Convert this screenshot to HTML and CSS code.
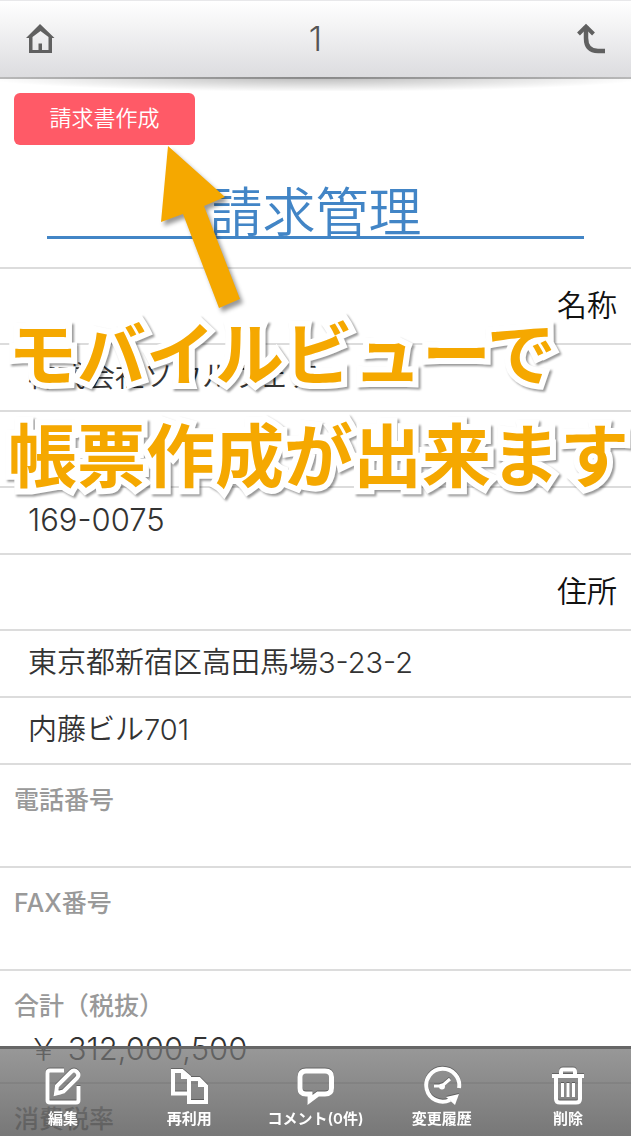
FILE: index.html
```html
<!DOCTYPE html>
<html lang="ja">
<head>
    <meta charset="UTF-8">
    <meta name="viewport" content="width=device-width, initial-scale=1.0">
    <title>請求管理</title>
    <link rel="stylesheet" href="styles.css">
</head>
<body>
    <header class="topbar">
        <button class="top-btn" aria-label="ホーム">
            <svg width="30" height="32" viewBox="0 0 30 32">
                <path d="M15 2 L29.500 16 H27 V31 H4 V16 H1 Z M15.500 9 L7.500 15 V28 H13.500 V21.500 H17 V28 H23.500 V15 Z" fill="#606060" fill-rule="evenodd"/>
            </svg>
        </button>
        <h1>1</h1>
        <button class="top-btn" aria-label="戻る">
            <svg width="30" height="32" viewBox="0 0 30 32" fill="none" stroke="#606060">
                <path d="M2.500 12 L10 4.500 L17.500 12" stroke-width="4"/>
                <path d="M10 4 V16 Q10 29 22 29 H29" stroke-width="4.500"/>
            </svg>
        </button>
    </header>

    <main class="record">
        <div class="actions">
            <button class="create">請求書作成</button>
        </div>
        <h2 class="title">請求管理</h2>
        <h3 class="label">名称</h3>
        <div class="value">株式会社ソウルウェア</div>
        <div class="label"></div>
        <div class="value number">169-0075</div>
        <h3 class="label">住所</h3>
        <div class="value">東京都新宿区高田馬場3-23-2</div>
        <div class="value">内藤ビル701</div>
        <div class="field"><h4>電話番号</h4></div>
        <div class="field"><h4>FAX番号</h4></div>
        <div class="field">
            <h4>合計（税抜）</h4>
            <p class="number">￥ 312,000,500</p>
        </div>
        <div class="field"><h4>消費税率</h4></div>
    </main>

    <!-- Callout over the record -->
    <svg class="arrow" width="100" height="180" viewBox="0 0 100 180">
        <path d="M18 6 L75 57 L54 66 L90 159 L69 168 L33 74 L11 82 Z" fill="#f5a800"/>
    </svg>
    <p class="callout">モバイルビューで<br>帳票作成が出来ます</p>

    <nav class="toolbar">
        <button>
            <svg width="40" height="40" viewBox="0 0 40 40" fill="none" stroke="#fff" stroke-width="4">
                <path d="M21 4.500 H7 Q4.500 4.500 4.500 7 V34 Q4.500 36.500 7 36.500 H33 Q35.500 36.500 35.500 34 V20"/>
                <path d="M13 27.500 L14 20 L28 6 Q31 3 34 6 Q37 9 34 12 L20.500 25.500 Z"/>
                <path d="M12 29 L13 22 L19 28 Z" fill="#fff" stroke="none"/>
            </svg>
            <span>編集</span>
        </button>
        <button>
            <svg width="40" height="40" viewBox="0 0 40 40" fill="none" stroke="#fff" stroke-width="4">
                <path d="M18 27.500 H4 V5 H13 L20 11 V12"/>
                <path d="M12 4 V13 H18 L20 11 Z" fill="#fff" stroke="none"/>
                <path d="M20 13 H30 L37 20 V36 H20 Z"/>
                <path d="M29 12 V21 H38 Z" fill="#fff" stroke="none"/>
            </svg>
            <span>再利用</span>
        </button>
        <button>
            <svg width="40" height="40" viewBox="0 0 40 40" fill="none" stroke="#fff" stroke-width="5">
                <path d="M10 5 H29 Q35.500 5 35.500 11 V22 Q35.500 28 29 28 H22 L14 34 V28 H10 Q4 28 4 22 V11 Q4 5 10 5 Z"/>
            </svg>
            <span>コメント(0件)</span>
        </button>
        <button>
            <svg width="40" height="40" viewBox="0 0 40 40" fill="none" stroke="#fff" stroke-width="4">
                <path d="M37 22 A16.500 16.500 0 1 0 28 34"/>
                <path d="M24 31 L37 28 L33 39 Z" fill="#fff" stroke="none"/>
                <path d="M12 20 H20 L28 13" stroke-width="3"/>
                <circle cx="20" cy="20.500" r="2" fill="#fff" stroke-width="2"/>
            </svg>
            <span>変更履歴</span>
        </button>
        <button>
            <svg width="40" height="40" viewBox="0 0 40 40" fill="none" stroke="#fff" stroke-width="4">
                <path d="M13 9 V6 Q13 3.500 15 3.500 H25 Q27 3.500 27 6 V9 M4 10 H36"/>
                <path d="M8 10 V33 Q8 36.500 12 36.500 H28 Q32 36.500 32 33 V10"/>
                <path d="M14.500 17 V31 M20 17 V31 M25.500 17 V31" stroke-width="3"/>
            </svg>
            <span>削除</span>
        </button>
    </nav>
</body>
</html>
```

FILE: styles.css
```css
* {
    box-sizing: border-box;
}
body {
    margin: 0;
    height: 100vh;
    overflow: hidden;
    background: #fff;
    color: #333;
    font-family: Inter, "Noto Sans CJK JP", sans-serif;
    font-weight: 350;
}
h1, h2, h3, h4, p {
    margin: 0;
    font-weight: 350;
}
button {
    border: none;
    background: none;
    padding: 0;
    font-family: inherit;
    cursor: pointer;
}
svg {
    display: block;
}

/* Top bar */
.topbar {
    position: relative;
    display: flex;
    justify-content: space-between;
    align-items: center;
    height: 79px;
    padding: 0 25px 2px;
    background: linear-gradient(#fff, #dcdcdf);
    border-top: 1px solid #e8e8ea;
    border-bottom: 2px solid #bbb;
}
.topbar::after {
    content: "";
    position: absolute;
    left: 0;
    right: 0;
    top: 100%;
    height: 14px;
    background: radial-gradient(ellipse at top, rgba(0, 0, 0, 0.28), transparent 75%);
}
.topbar h1 {
    font-size: 34px;
    font-weight: 300;
    color: #555;
}

/* Record */
.actions {
    padding: 14px 14px 0;
}
.create {
    width: 181px;
    height: 52px;
    padding-bottom: 6px;
    border-radius: 6px;
    background: #ff5a67;
    color: #fff;
    font-size: 22px;
    font-weight: 350;
}
.title {
    margin: 37px 47px 28px;
    height: 57px;
    border-bottom: 3px solid #4285c6;
    color: #4285c6;
    font-size: 53px;
    line-height: 62px;
    text-align: center;
}
.label {
    height: 76px;
    padding: 0 14px;
    border-top: 2px solid #dcdcdc;
    color: #111;
    font-size: 30px;
    line-height: 72px;
    text-align: right;
}
.value {
    height: 67px;
    padding: 0 28px;
    border-top: 2px solid #dcdcdc;
    font-size: 29px;
    line-height: 63px;
}
.field {
    min-height: 103px;
    padding: 16px 14px 14px;
    border-top: 2px solid #dcdcdc;
}
.field h4 {
    color: #999;
    font-size: 25px;
    font-weight: 500;
    line-height: 38px;
}
.field p {
    padding: 5px 14px 0;
    line-height: 38px;
}
.number {
    font-size: 31px;
    font-weight: 300;
}

/* Callout */
.arrow {
    position: absolute;
    left: 150px;
    top: 140px;
    filter: drop-shadow(3px 4px 2px rgba(0, 0, 0, 0.4));
}
.callout {
    position: absolute;
    left: 8px;
    top: 299px;
    color: #f5a800;
    font-family: "Noto Sans CJK JP", sans-serif;
    font-size: 69px;
    font-weight: 700;
    line-height: 102px;
    white-space: nowrap;
    -webkit-text-stroke: 12px #fff;
    paint-order: stroke fill;
    filter: drop-shadow(2px 2px 1px rgba(0, 0, 0, 0.4));
}

/* Bottom toolbar */
.toolbar {
    position: fixed;
    left: 0;
    right: 0;
    bottom: 0;
    display: flex;
    height: 90px;
    border-top: 3px solid #666;
    background: linear-gradient(rgba(117, 117, 117, 0.75), rgba(74, 74, 74, 0.75)) padding-box;
}
.toolbar button {
    flex: 1;
    display: flex;
    flex-direction: column;
    align-items: center;
    padding-top: 17px;
    color: #fff;
    font-size: 15px;
    font-weight: 600;
    line-height: 26px;
    white-space: nowrap;
}
.toolbar svg {
    filter: drop-shadow(0 -1px 0 rgba(0, 0, 0, 0.3));
}
```
